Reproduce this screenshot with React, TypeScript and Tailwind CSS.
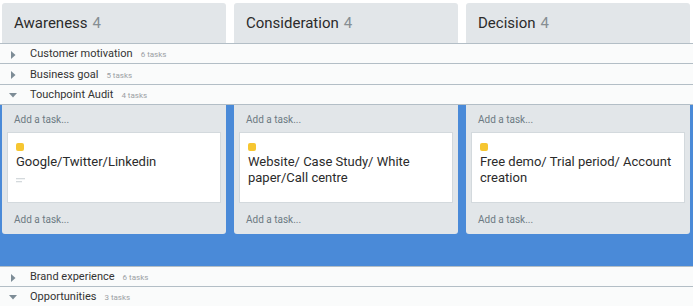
import React from 'react';

const columns = [
  { name: 'Awareness', count: 4, card: 'Google/Twitter/Linkedin', desc: true },
  { name: 'Consideration', count: 4, card: 'Website/ Case Study/ White paper/Call centre', desc: false },
  { name: 'Decision', count: 4, card: 'Free demo/ Trial period/ Account creation', desc: false },
];

const Caret = ({ open }: { open: boolean }) =>
  open ? (
    <svg width="8" height="5" viewBox="0 0 8 5" className="ml-[9px] mr-[13px]">
      <path d="M0 0 L8 0 L4 4.5 Z" fill="#7d8c96" />
    </svg>
  ) : (
    <svg width="5" height="8" viewBox="0 0 5 8" className="ml-[11px] mr-[14px]">
      <path d="M0 0 L4.5 4 L0 8 Z" fill="#7d8c96" />
    </svg>
  );

const Lane = ({ label, tasks, open = false, tall = false }: { label: string; tasks: number; open?: boolean; tall?: boolean }) => (
  <div className={`${tall ? 'h-[21px]' : 'h-[20px]'} border-t border-[#b3bec6] flex items-center pt-[2px] bg-[#fafbfb]`}>
    <Caret open={open} />
    <span className="text-[11px] text-[#333]">{label}</span>
    <span className="text-[8px] text-[#9aa0a4] ml-[8px] mt-[1px]">{tasks} tasks</span>
  </div>
);

const App = () => {
  return (
    <div className="w-[693px] h-[306px] overflow-hidden bg-[#fafbfb] font-['Roboto',sans-serif]">
      {/* Column headers */}
      <div className="flex gap-2 pl-[2px] pt-[3px] bg-white">
        {columns.map((col) => (
          <div key={col.name} className="w-[224px] h-[40px] bg-[#e2e6e9] rounded-t-[3px] pl-3 flex items-center text-[15px] text-[#2b2b2b]">
            {col.name}
            <span className="text-[#868e93] ml-[5px]">{col.count}</span>
          </div>
        ))}
      </div>

      <Lane label="Customer motivation" tasks={6} />
      <Lane label="Business goal" tasks={5} tall />
      <Lane label="Touchpoint Audit" tasks={4} open />

      {/* Expanded lane */}
      <div className="h-[162px] bg-[#4a8ad8] border-t border-[#b3bec6]">
        <div className="flex gap-2 pl-[2px]">
          {columns.map((col) => (
            <div key={col.name} className="w-[224px] h-[129px] bg-[#e2e6e9] rounded-b-[3px] flex flex-col">
              <div className="h-[27px] pl-3 pt-[2px] flex items-center text-[10px] text-[#6d7a83]">Add a task...</div>
              <div className="mx-[5px] h-[71px] bg-white border border-[#d3d9dd] px-[8px] pt-[10px]">
                <div className="w-[8px] h-[8px] rounded-[2px] bg-[#f6c631]" />
                <div className="text-[13px] leading-[16px] text-[#2b2b2b] mt-[3px]">{col.card}</div>
                {col.desc && (
                  <svg width="9" height="6" viewBox="0 0 9 6" className="mt-[8px]">
                    <rect x="0" y="0" width="9" height="1.3" fill="#d4d9dc" />
                    <rect x="0" y="3" width="6" height="1.3" fill="#d4d9dc" />
                  </svg>
                )}
              </div>
              <div className="flex-1 pl-3 pt-[2px] flex items-center text-[10px] text-[#6d7a83]">Add a task...</div>
            </div>
          ))}
        </div>
      </div>

      <Lane label="Brand experience" tasks={6} />
      <Lane label="Opportunities" tasks={3} open />
    </div>
  );
};

export default App;
